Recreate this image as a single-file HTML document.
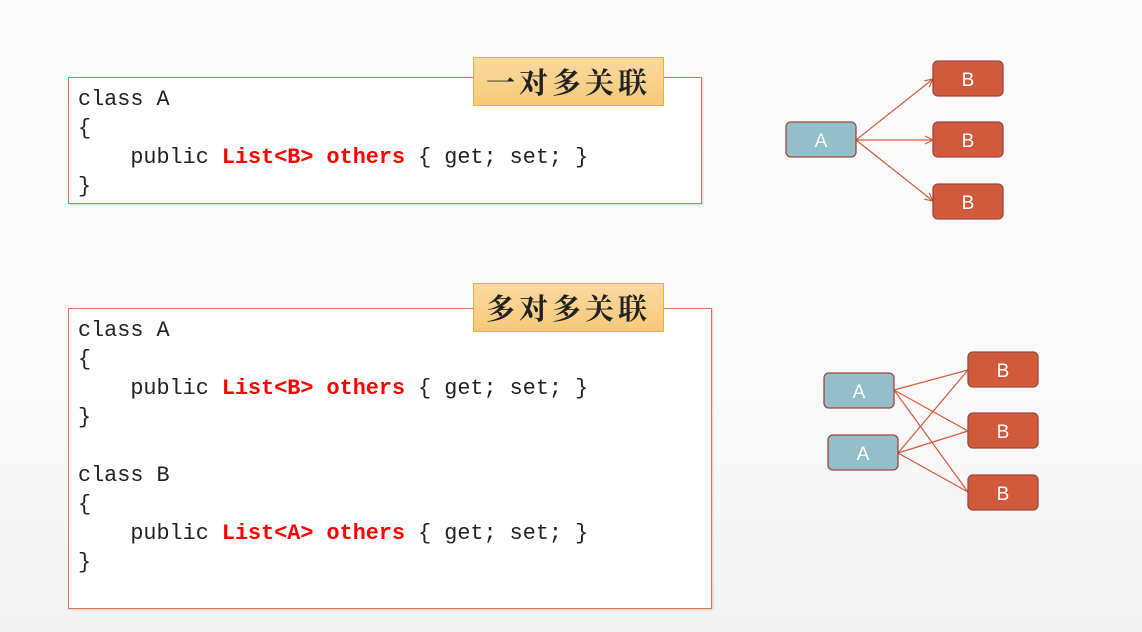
<!DOCTYPE html>
<html><head><meta charset="utf-8"><style>
body{margin:0;width:1142px;height:632px;overflow:hidden;background:linear-gradient(#fbfbfb,#fafafa 60%,#f2f2f2);position:relative;font-family:"Liberation Sans",sans-serif}
.box{position:absolute;background:#fff;border:1.5px solid #d9745c;box-sizing:border-box;box-shadow:1px 1px 2px rgba(0,0,0,.15)}
pre{position:absolute;margin:0;font-family:"Liberation Mono","DejaVu Sans Mono",monospace;font-size:21.8px;line-height:29px;color:#222}
.r{color:#f00;font-weight:bold}
.lab{position:absolute;width:191px;height:49px;background:linear-gradient(#f9d9a0,#f6c979);border:1px solid #e8b040;box-sizing:border-box;font-family:"Noto Serif CJK SC",serif;font-size:29px;font-weight:bold;letter-spacing:4px;text-align:center;line-height:47px;color:#222}
</style></head><body>
<div class="box" style="left:68px;top:77px;width:634px;height:127px"></div>
<pre style="left:78px;top:85px">class A
{
    public <span class="r">List&lt;B&gt;</span> <span class="r">others</span> { get; set; }
}</pre>
<div class="lab" style="left:473px;top:57px">一对多关联</div>
<div class="box" style="left:68px;top:308px;width:644px;height:301px"></div>
<pre style="left:78px;top:316px">class A
{
    public <span class="r">List&lt;B&gt;</span> <span class="r">others</span> { get; set; }
}

class B
{
    public <span class="r">List&lt;A&gt;</span> <span class="r">others</span> { get; set; }
}</pre>
<div class="lab" style="left:473px;top:283px">多对多关联</div>
<svg width="1142" height="632" style="position:absolute;left:0;top:0" font-family="Liberation Sans, sans-serif" font-size="19">
<defs><marker id="m" markerWidth="10" markerHeight="10" refX="9" refY="5" orient="auto" markerUnits="userSpaceOnUse"><path d="M1,1 L9,5 L1,9" fill="none" stroke="#d9593b" stroke-width="1.2"/></marker></defs>
<g stroke="#d9593b" stroke-width="1.2" fill="none">
<line x1="856" y1="140" x2="933" y2="79" marker-end="url(#m)"/>
<line x1="856" y1="140" x2="933" y2="140" marker-end="url(#m)"/>
<line x1="856" y1="140" x2="933" y2="201" marker-end="url(#m)"/>
<line x1="894" y1="390" x2="968" y2="370"/><line x1="894" y1="390" x2="968" y2="431"/><line x1="894" y1="390" x2="968" y2="492"/>
<line x1="898" y1="453" x2="968" y2="370"/><line x1="898" y1="453" x2="968" y2="431"/><line x1="898" y1="453" x2="968" y2="492"/>
</g>
<g stroke="#a0473a" stroke-width="1.3">
<rect x="786" y="122" width="70" height="35" rx="5" fill="#93bfcb"/>
<rect x="824" y="373" width="70" height="35" rx="5" fill="#93bfcb"/>
<rect x="828" y="435" width="70" height="35" rx="5" fill="#93bfcb"/>
<rect x="933" y="61" width="70" height="35" rx="5" fill="#d15a3c"/>
<rect x="933" y="122" width="70" height="35" rx="5" fill="#d15a3c"/>
<rect x="933" y="184" width="70" height="35" rx="5" fill="#d15a3c"/>
<rect x="968" y="352" width="70" height="35" rx="5" fill="#d15a3c"/>
<rect x="968" y="413" width="70" height="35" rx="5" fill="#d15a3c"/>
<rect x="968" y="475" width="70" height="35" rx="5" fill="#d15a3c"/>
</g>
<g fill="#fff" text-anchor="middle">
<text x="821" y="147">A</text><text x="859" y="398">A</text><text x="863" y="460">A</text>
<text x="968" y="86">B</text><text x="968" y="147">B</text><text x="968" y="209">B</text>
<text x="1003" y="377">B</text><text x="1003" y="438">B</text><text x="1003" y="500">B</text>
</g>
</svg>
</body></html>
